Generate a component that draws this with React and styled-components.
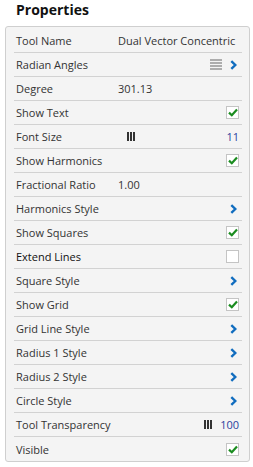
import React from "react";
import styled, { createGlobalStyle } from "styled-components";

const Global = createGlobalStyle`
  html, body { margin: 0; padding: 0; background: #ffffff; }
  body { font-family: "Open Sans", "Liberation Sans", sans-serif; }
`;

const Page = styled.div`
  width: 253px;
  height: 467px;
  box-sizing: border-box;
  padding: 0 4px 0 5px;
`;

const Title = styled.h1`
  margin: 0 0 7px 11px;
  font-size: 14px;
  line-height: 19px;
  font-weight: 700;
  color: #111;
`;

const Panel = styled.div`
  width: 245px;
  box-sizing: border-box;
  border: 1px solid #cfcfcf;
  border-radius: 3px;
  background: #f4f4f4;
  padding: 2px 7px 0 8px;
`;

const Row = styled.div`
  display: flex;
  align-items: center;
  height: 24px;
  box-sizing: border-box;
  padding: 0 3px 0 2px;
  border-bottom: 1px solid #d2d2d2;
  font-size: 11px;
  color: #333;
  &:last-child { border-bottom: none; }
`;

const Label = styled.div`
  width: 102px;
  flex: none;
  white-space: nowrap;
  color: ${(p) => (p.$strong ? "#111" : "#333")};
`;

const Value = styled.div`
  flex: 1;
  display: flex;
  align-items: center;
  min-width: 0;
  white-space: nowrap;
`;

const Spacer = styled.div`
  flex: 1;
`;

const Num = styled.span`
  color: #2b3f9e;
`;

const Bars = styled.svg`
  display: block;
  margin-left: ${(p) => p.$left || 0}px;
  margin-right: ${(p) => p.$right || 0}px;
`;

const Menu = styled.svg`
  display: block;
  margin-right: 8px;
`;

const Chevron = styled.svg`
  display: block;
  margin-right: 2px;
`;

const Box = styled.div`
  width: 11px;
  height: 11px;
  border: 1px solid #c4c4c4;
  background: #fff;
  display: flex;
  align-items: center;
  justify-content: center;
`;

const BarsIcon = (props) => (
  <Bars width="8" height="9" viewBox="0 0 8 9" {...props}>
    <rect x="0" y="0" width="2" height="9" fill="#333" />
    <rect x="3" y="0" width="2" height="9" fill="#333" />
    <rect x="6" y="0" width="2" height="9" fill="#333" />
  </Bars>
);

const MenuIcon = () => (
  <Menu width="12" height="11" viewBox="0 0 12 11">
    <rect x="0" y="0.5" width="12" height="1" fill="#666" />
    <rect x="0" y="3.5" width="12" height="1" fill="#666" />
    <rect x="0" y="6.5" width="12" height="1" fill="#666" />
    <rect x="0" y="9.5" width="12" height="1" fill="#666" />
  </Menu>
);

const ChevronIcon = () => (
  <Chevron width="7" height="10" viewBox="0 0 7 10">
    <path d="M1.3 1.2 L5.3 5 L1.3 8.8" fill="none" stroke="#116dbf" strokeWidth="2.4" strokeLinejoin="miter" />
  </Chevron>
);

const Check = ({ on }) => (
  <Box>
    {on && (
      <svg width="10" height="9" viewBox="0 0 10 9">
        <path d="M1 4.6 L3.8 7.2 L9 1.4" fill="none" stroke="#1a8c1f" strokeWidth="2.2" />
      </svg>
    )}
  </Box>
);

const rows = [
  { label: "Tool Name", text: "Dual Vector Concentric" },
  { label: "Radian Angles", menu: true, chevron: true },
  { label: "Degree", text: "301.13" },
  { label: "Show Text", check: true },
  { label: "Font Size", barsLeft: 9, num: "11" },
  { label: "Show Harmonics", check: true },
  { label: "Fractional Ratio", text: "1.00" },
  { label: "Harmonics Style", chevron: true },
  { label: "Show Squares", check: true },
  { label: "Extend Lines", check: false, strong: true },
  { label: "Square Style", chevron: true },
  { label: "Show Grid", check: true },
  { label: "Grid Line Style", chevron: true },
  { label: "Radius 1 Style", chevron: true },
  { label: "Radius 2 Style", chevron: true },
  { label: "Circle Style", chevron: true },
  { label: "Tool Transparency", barsRight: 8, num: "100" },
  { label: "Visible", check: true },
];

export default function App() {
  return (
    <Page>
      <Global />
      <Title>Properties</Title>
      <Panel>
        {rows.map((r) => (
          <Row key={r.label}>
            <Label $strong={r.strong}>{r.label}</Label>
            <Value>
              {r.text && <span>{r.text}</span>}
              {r.barsLeft != null && <BarsIcon $left={r.barsLeft} />}
              <Spacer />
              {r.barsRight != null && <BarsIcon $right={r.barsRight} />}
              {r.num && <Num>{r.num}</Num>}
              {r.menu && <MenuIcon />}
              {r.chevron && <ChevronIcon />}
              {r.check !== undefined && <Check on={r.check} />}
            </Value>
          </Row>
        ))}
      </Panel>
    </Page>
  );
}
